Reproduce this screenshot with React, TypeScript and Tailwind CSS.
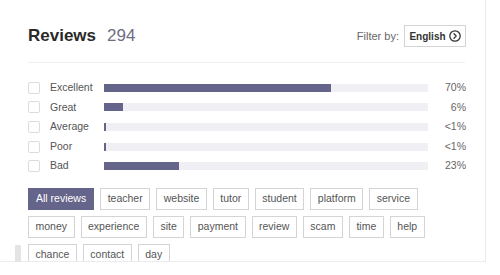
const ratings = [
  { label: "Excellent", pct: 70, text: "70%" },
  { label: "Great", pct: 6, text: "6%" },
  { label: "Average", pct: 0.6, text: "<1%" },
  { label: "Poor", pct: 0.6, text: "<1%" },
  { label: "Bad", pct: 23, text: "23%" },
];

const tagRows = [
  ["All reviews", "teacher", "website", "tutor", "student", "platform", "service"],
  ["money", "experience", "site", "payment", "review", "scam", "time", "help"],
  ["chance", "contact", "day"],
];

function CircleChevron() {
  return (
    <svg width="12" height="12" viewBox="0 0 12 12" fill="none" stroke="#333" strokeWidth="1.3">
      <circle cx="6" cy="6" r="5.2" />
      <path d="M5 3.8 L7.2 6 L5 8.2" strokeLinecap="round" strokeLinejoin="round" />
    </svg>
  );
}

export default function App() {
  return (
    <div className="relative h-[275px] w-[500px] bg-white font-['Liberation_Sans',Arial,sans-serif]">
      <div className="absolute left-[15px] top-[245px] h-[17px] w-[6px] bg-[#e4e4e6]" />
      <div className="h-[262px] w-[486px] overflow-hidden border-b border-r border-[#ececee] bg-white pl-[28px] pr-[19px] pt-[25px]">
        <div className="flex h-[22px] items-center justify-between">
          <div className="flex items-baseline">
            <span className="text-[17px] font-bold text-[#2a2a2a]">Reviews</span>
            <span className="ml-[11px] text-[17px] text-[#6e6d85]">294</span>
          </div>
          <div className="flex items-center">
            <span className="mr-[5px] text-[11px] text-[#666]">Filter by:</span>
            <div className="flex h-[22px] w-[62px] items-center justify-center gap-[3px] border border-[#d4d4d8] text-[10px] font-bold text-[#333]">
              English
              <CircleChevron />
            </div>
          </div>
        </div>
        <div className="mt-[15px] mr-[1px] border-t border-[#f0f0f2]" />
        <div className="mt-[15px] w-[438px]">
          {ratings.map((r) => (
            <div key={r.label} className="flex h-[19.6px] items-center">
              <div className="h-[12px] w-[12px] rounded-[2px] border border-[#dcdce0] bg-white" />
              <span className="ml-[10px] w-[54px] text-[10.5px] text-[#555]">{r.label}</span>
              <div className="h-[8px] w-[324px] bg-[#f0f0f4]">
                <div className="h-full bg-[#65648a]" style={{ width: `${r.pct}%` }} />
              </div>
              <span className="flex-1 text-right text-[10.5px] text-[#666]">{r.text}</span>
            </div>
          ))}
        </div>
        <div className="mt-[12px] flex flex-col gap-[6px]">
          {tagRows.map((row, i) => (
            <div key={i} className="flex gap-[6px]">
              {row.map((t) =>
                t === "All reviews" ? (
                  <span key={t} className="flex h-[22px] items-center bg-[#65648a] px-[8px] text-[10.5px] text-white">
                    {t}
                  </span>
                ) : (
                  <span key={t} className="flex h-[22px] items-center border border-[#d4d4d8] px-[6.5px] text-[10.5px] text-[#555]">
                    {t}
                  </span>
                )
              )}
            </div>
          ))}
        </div>
      </div>
    </div>
  );
}
